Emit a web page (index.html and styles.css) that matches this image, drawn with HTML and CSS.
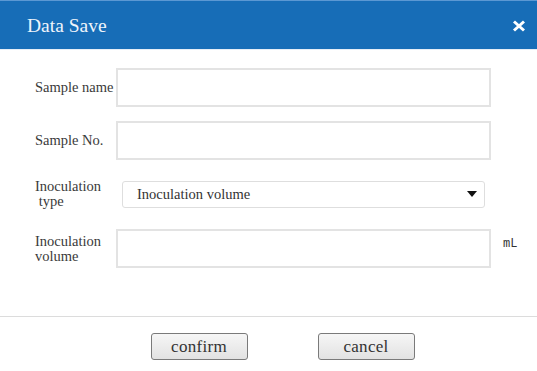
FILE: index.html
```html
<!DOCTYPE html>
<html lang="en">

<head>
    <meta charset="UTF-8">
    <meta name="viewport" content="width=device-width, initial-scale=1.0">
    <title>Data Save</title>
    <link rel="stylesheet" href="styles.css">
</head>

<body>
    <div class="dialog">
        <div class="dialog-header">
            <span class="dialog-title">Data Save</span>
            <span class="dialog-close">
                <svg width="14" height="12" viewBox="0 0 14 12">
                    <path d="M2 1.5 L12 10.5 M12 1.5 L2 10.5" stroke="#fff" stroke-width="3" stroke-linecap="butt" fill="none" />
                </svg>
            </span>
        </div>

        <div class="dialog-body">
            <div class="form-row">
                <label class="form-label" for="sampleName">Sample name</label>
                <input class="form-input" id="sampleName" type="text">
            </div>
            <div class="form-row">
                <label class="form-label" for="sampleNo">Sample No.</label>
                <input class="form-input" id="sampleNo" type="text">
            </div>
            <div class="form-row select-row">
                <label class="form-label two-line">Inoculation<br>&nbsp;type</label>
                <div class="form-select">
                    <span>Inoculation volume</span>
                    <span class="select-arrow"></span>
                </div>
            </div>
            <div class="form-row">
                <label class="form-label two-line" for="volume">Inoculation<br>volume</label>
                <input class="form-input" id="volume" type="text">
                <span class="unit">mL</span>
            </div>
        </div>

        <div class="dialog-footer">
            <button class="btn">confirm</button>
            <button class="btn">cancel</button>
        </div>
    </div>
</body>

</html>
```

FILE: styles.css
```css
body {
    margin: 0;
    background: #fff;
    font-family: "Liberation Serif", "Times New Roman", serif;
    color: #333;
}

.dialog {
    width: 537px;
    height: 371px;
}

.dialog-header {
    height: 48px;
    border-top: 1px solid #5b98d3;
    border-bottom: 1px solid #e6eef7;
    background: #176db7;
    display: flex;
    align-items: center;
    justify-content: space-between;
    padding: 0 11px 0 27px;
}

.dialog-title {
    color: #eef4fb;
    font-size: 19.5px;
    padding-top: 2px;
}

.dialog-close {
    display: flex;
    margin-top: 1px;
}

.dialog-body {
    padding-top: 18px;
    display: flex;
    flex-direction: column;
    gap: 14px;
    height: 267px;
    box-sizing: border-box;
    border-bottom: 1px solid #dcdcdc;
}

.form-row {
    display: flex;
    align-items: center;
}

.select-row {
    padding: 5px 0 6px;
}

.form-label {
    width: 81px;
    padding-left: 35px;
    font-size: 14.5px;
    color: #3a3a3a;
}

.two-line {
    line-height: 15px;
}

.form-input {
    width: 375px;
    height: 39px;
    box-sizing: border-box;
    margin: 0;
    border: 2px solid #e3e3e3;
    background: #fff;
    outline: none;
}

.form-select {
    width: 363px;
    height: 27px;
    box-sizing: border-box;
    margin-left: 6px;
    border: 1px solid #dedede;
    border-radius: 3px;
    display: flex;
    align-items: center;
    justify-content: space-between;
    padding: 0 4px 0 14px;
    font-size: 14.5px;
    color: #333;
}

.select-arrow {
    width: 0;
    height: 0;
    border-left: 5px solid transparent;
    border-right: 5px solid transparent;
    border-top: 6px solid #111;
    margin-right: 3px;
}

.unit {
    margin-left: 12px;
    font-family: "Liberation Mono", "Courier New", monospace;
    font-size: 12px;
    color: #333;
    margin-top: -10px;
}

.dialog-footer {
    display: flex;
    justify-content: center;
    gap: 70px;
    padding: 16px 0 0 28px;
}

.btn {
    width: 97px;
    height: 27px;
    border: 1px solid #7a7a7a;
    border-radius: 3px;
    background: linear-gradient(#f6f6f6, #e2e2e2);
    font-family: "Liberation Serif", "Times New Roman", serif;
    font-size: 17px;
    color: #333;
    padding: 0;
    letter-spacing: 0.3px;
}
```
